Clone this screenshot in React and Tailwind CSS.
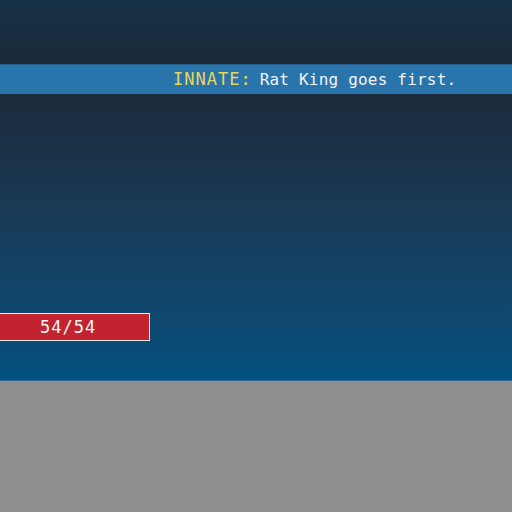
export default function App() {
  return (
    <div className="w-[512px] h-[512px] flex flex-col bg-[#8f8f8f] overflow-hidden" style={{ fontFamily: '"DejaVu Sans Mono", monospace' }}>
      <div className="h-[64px] bg-gradient-to-b from-[#163248] to-[#1a2838]" />
      <div className="h-[30px] bg-[#2a74ac] border-t border-[#23608f] flex items-center pl-[173px] text-[17px] leading-none">
        <span className="text-[#e6d65c] tracking-[1px]">INNATE:</span>
        <span className="text-[#f2f2f2] ml-[8px] text-[16px] tracking-[0.2px]">Rat King goes first.</span>
      </div>
      <div className="h-[286px] bg-gradient-to-b from-[#1b2a3b] to-[#02517f] flex flex-col">
        <div className="h-[219px]" />
        <div className="w-[150px] h-[28px] bg-[#c1242f] border border-l-0 border-[#f4e6e6] flex items-center pl-[40px] text-[17px] tracking-[1px] text-[#f4f4f4] leading-none">
          54/54
        </div>
      </div>
      <div className="h-px bg-[#2b6a94]" />
      <div className="flex-1 bg-[#8f8f8f]" />
    </div>
  );
}
